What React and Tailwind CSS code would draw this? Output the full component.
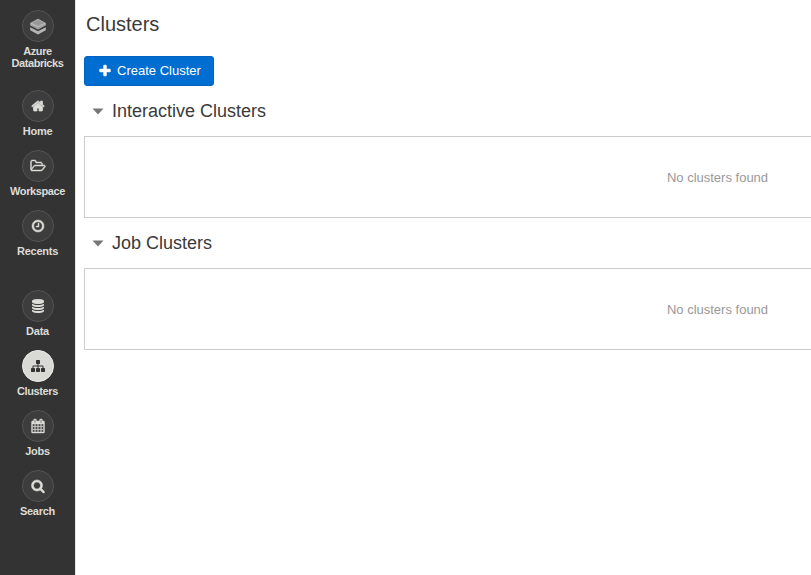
const icons = {
  home: "M1472 992v480q0 26-19 45t-45 19h-384v-384h-256v384h-384q-26 0-45-19t-19-45v-480q0-1 .5-3t.5-3l575-474 575 474q1 2 1 6zm223-69l-62 74q-8 9-21 11h-3q-13 0-21-7l-692-577-692 577q-12 8-24 7-13-2-21-11l-62-74q-8-10-7-23.5t11-21.5l719-599q32-26 76-26t76 26l244 204v-195q0-14 9-23t23-9h192q14 0 23 9t9 23v408l219 182q10 8 11 21.5t-7 23.5z",
  folder: "M1845 931q0-35-53-35h-1088q-40 0-85.5 21.5t-71.5 52.5l-294 363q-18 24-18 40 0 35 53 35h1088q40 0 86-22t71-53l294-363q18-22 18-39zm-1141-163h768v-160q0-40-28-68t-68-28h-576q-40 0-68-28t-28-68v-64q0-40-28-68t-68-28h-320q-40 0-68 28t-28 68v853l256-315q44-53 116-87.5t140-34.5zm1269 163q0 62-46 120l-295 363q-43 53-116 87.5t-140 34.5h-1088q-92 0-158-66t-66-158v-960q0-92 66-158t158-66h320q92 0 158 66t66 158v32h544q92 0 158 66t66 158v160h192q54 0 99 24.5t67 70.5q15 32 15 68z",
  clock: "M1024 544v448q0 14-9 23t-23 9h-320q-14 0-23-9t-9-23v-64q0-14 9-23t23-9h224v-352q0-14 9-23t23-9h64q14 0 23 9t9 23zm416 352q0-148-73-273t-198-198-273-73-273 73-198 198-73 273 73 273 198 198 273 73 273-73 198-198 73-273zm224 0q0 209-103 385.5t-279.5 279.5-385.5 103-385.5-103-279.5-279.5-103-385.5 103-385.5 279.5-279.5 385.5-103 385.5 103 279.5 279.5 103 385.5z",
  database: "M896 768q237 0 443-43t325-127v170q0 69-103 128t-280 93.5-385 34.5-385-34.5-280-93.5-103-128v-170q119 84 325 127t443 43zm0 768q237 0 443-43t325-127v170q0 69-103 128t-280 93.5-385 34.5-385-34.5-280-93.5-103-128v-170q119 84 325 127t443 43zm0-384q237 0 443-43t325-127v170q0 69-103 128t-280 93.5-385 34.5-385-34.5-280-93.5-103-128v-170q119 84 325 127t443 43zm0-1152q208 0 385 34.5t280 93.5 103 128v128q0 69-103 128t-280 93.5-385 34.5-385-34.5-280-93.5-103-128v-128q0-69 103-128t280-93.5 385-34.5z",
  sitemap: "M1792 1248v320q0 40-28 68t-68 28h-320q-40 0-68-28t-28-68v-320q0-40 28-68t68-28h96v-192h-512v192h96q40 0 68 28t28 68v320q0 40-28 68t-68 28h-320q-40 0-68-28t-28-68v-320q0-40 28-68t68-28h96v-192h-512v192h96q40 0 68 28t28 68v320q0 40-28 68t-68 28h-320q-40 0-68-28t-28-68v-320q0-40 28-68t68-28h96v-192q0-52 38-90t90-38h512v-192h-96q-40 0-68-28t-28-68v-320q0-40 28-68t68-28h320q40 0 68 28t28 68v320q0 40-28 68t-68 28h-96v192h512q52 0 90 38t38 90v192h96q40 0 68 28t28 68z",
  calendar: "M192 1664h288v-288h-288v288zm352 0h320v-288h-320v288zm-352-352h288v-320h-288v320zm352 0h320v-320h-320v320zm-352-384h288v-288h-288v288zm736 736h320v-288h-320v288zm-384-736h320v-288h-320v288zm768 736h288v-288h-288v288zm-384-352h320v-320h-320v320zm-352-864v-288q0-13-9.5-22.5t-22.5-9.5h-64q-13 0-22.5 9.5t-9.5 22.5v288q0 13 9.5 22.5t22.5 9.5h64q13 0 22.5-9.5t9.5-22.5zm736 864h288v-320h-288v320zm-384-384h320v-288h-320v288zm384 0h288v-288h-288v288zm32-480v-288q0-13-9.5-22.5t-22.5-9.5h-64q-13 0-22.5 9.5t-9.5 22.5v288q0 13 9.5 22.5t22.5 9.5h64q13 0 22.5-9.5t9.5-22.5zm384-64v1280q0 52-38 90t-90 38h-1408q-52 0-90-38t-38-90v-1280q0-52 38-90t90-38h128v-96q0-66 47-113t113-47h64q66 0 113 47t47 113v96h384v-96q0-66 47-113t113-47h64q66 0 113 47t47 113v96h128q52 0 90 38t38 90z",
  search: "M1216 832q0-185-131.5-316.5t-316.5-131.5-316.5 131.5-131.5 316.5 131.5 316.5 316.5 131.5 316.5-131.5 131.5-316.5zm512 832q0 52-38 90t-90 38q-54 0-90-38l-343-342q-179 124-399 124-143 0-273.5-55.5t-225-150-150-225-55.5-273.5 55.5-273.5 150-225 225-150 273.5-55.5 273.5 55.5 225 150 150 225 55.5 273.5q0 220-124 399l343 343q37 37 37 90z",
  plus: "M1600 736v192q0 40-28 68t-68 28h-416v416q0 40-28 68t-68 28h-192q-40 0-68-28t-28-68v-416h-416q-40 0-68-28t-28-68v-192q0-40 28-68t68-28h416v-416q0-40 28-68t68-28h192q40 0 68 28t28 68v416h416q40 0 68 28t28 68z",
};

// Extra outline that thickens the finer glyphs at small sizes.
const outlines = { home: 90, folder: 60, clock: 60, calendar: 50, search: 70, plus: 60 };

function Icon({ name, className = "h-3.5 w-3.5" }) {
  const width = name === "folder" ? 2048 : 1792;
  return (
    <svg
      viewBox={`0 0 ${width} 1792`}
      className={`overflow-visible ${className}`}
      fill="currentColor"
      stroke={outlines[name] ? "currentColor" : "none"}
      strokeWidth={outlines[name] || 0}
      aria-hidden="true"
    >
      <path d={icons[name]} />
    </svg>
  );
}

function BrandMark() {
  return (
    <svg viewBox="0 0 16 17" className="h-[17px] w-4" aria-hidden="true">
      <path d="M8 0.7 15.8 4.9V7.2L8 11.4 0.2 7.2V4.9Z" fill="#b5b5b5" />
      <path d="M8 1.8 14 5 8 8.1 2 5Z" fill="#989898" />
      <path d="M1.2 6.5 8 10 14.8 6.5V7.1L8 10.7 1.2 7.1Z" fill="#858585" />
      <path d="M0.2 9.2 8 13.2 15.8 9.2V12.2L8 16.4 0.2 12.2Z" fill="#b5b5b5" />
    </svg>
  );
}

function NavItem({ label, icon, active, className = "h-[60px]", labelClass = "tracking-[-0.25px]" }) {
  return (
    <a className={`flex shrink-0 flex-col items-center pl-px ${className}`}>
      <span
        className={`flex h-8 w-8 items-center justify-center rounded-full border ${
          active ? "border-[#eeeeec] bg-[#d9d9d6] text-[#333333]" : "border-[#535353] bg-[#3d3d3d] text-[#dcdcd8]"
        }`}
      >
        {icon === "brand" ? <BrandMark /> : <Icon name={icon} className={icon === "folder" ? "h-3.5 w-4" : "h-3.5 w-3.5"} />}
      </span>
      <span className={`mt-[3px] -ml-px text-center text-[11px] leading-3 font-bold text-[#dcdcd8] ${labelClass}`}>{label}</span>
    </a>
  );
}

function ClusterSection({ title }) {
  return (
    <section className="h-[132px]">
      <h2 className="flex h-[50px] items-center pl-2 text-[18px] text-[#3a3a3a]">
        <svg viewBox="0 0 12 7" className="mr-2 h-[7px] w-3" aria-hidden="true">
          <path d="M0.5 0.5H11.5L6 6.5Z" fill="#777777" />
        </svg>
        {title}
      </h2>
      <div className="flex h-[82px] w-[1267px] items-center justify-center border border-[#cccccc] pt-0.5 text-[13px] text-[#999999]">
        No clusters found
      </div>
    </section>
  );
}

export default function App() {
  return (
    <div className="flex h-[575px] w-full overflow-hidden bg-white font-['Liberation_Sans',Arial,sans-serif]">
      <nav className="flex w-[75px] shrink-0 flex-col bg-[#333333] pt-2.5">
        <NavItem label={<>Azure<br />Databricks</>} icon="brand" className="h-20" labelClass="tracking-[-0.45px]" />
        <NavItem label="Home" icon="home" />
        <NavItem label="Workspace" icon="folder" labelClass="tracking-[-0.4px]" />
        <NavItem label="Recents" icon="clock" className="h-20" />
        <NavItem label="Data" icon="database" />
        <NavItem label="Clusters" icon="sitemap" active labelClass="tracking-[-0.4px]" />
        <NavItem label="Jobs" icon="calendar" />
        <NavItem label="Search" icon="search" />
      </nav>
      <main className="min-w-0 flex-1 overflow-hidden border-l border-[#e5e5e5] pl-2">
        <h1 className="h-14 pt-[9px] pl-0.5 text-[20px] leading-[30px] text-[#3a3a3a]">Clusters</h1>
        <button className="flex h-[30px] w-[130px] items-center rounded-[3px] border border-[#0062c1] bg-[#006dd1] pl-[13px] text-[13px] text-white">
          <Icon name="plus" className="mr-[5px] h-3.5 w-3.5" />
          Create Cluster
        </button>
        <ClusterSection title="Interactive Clusters" />
        <ClusterSection title="Job Clusters" />
      </main>
    </div>
  );
}
